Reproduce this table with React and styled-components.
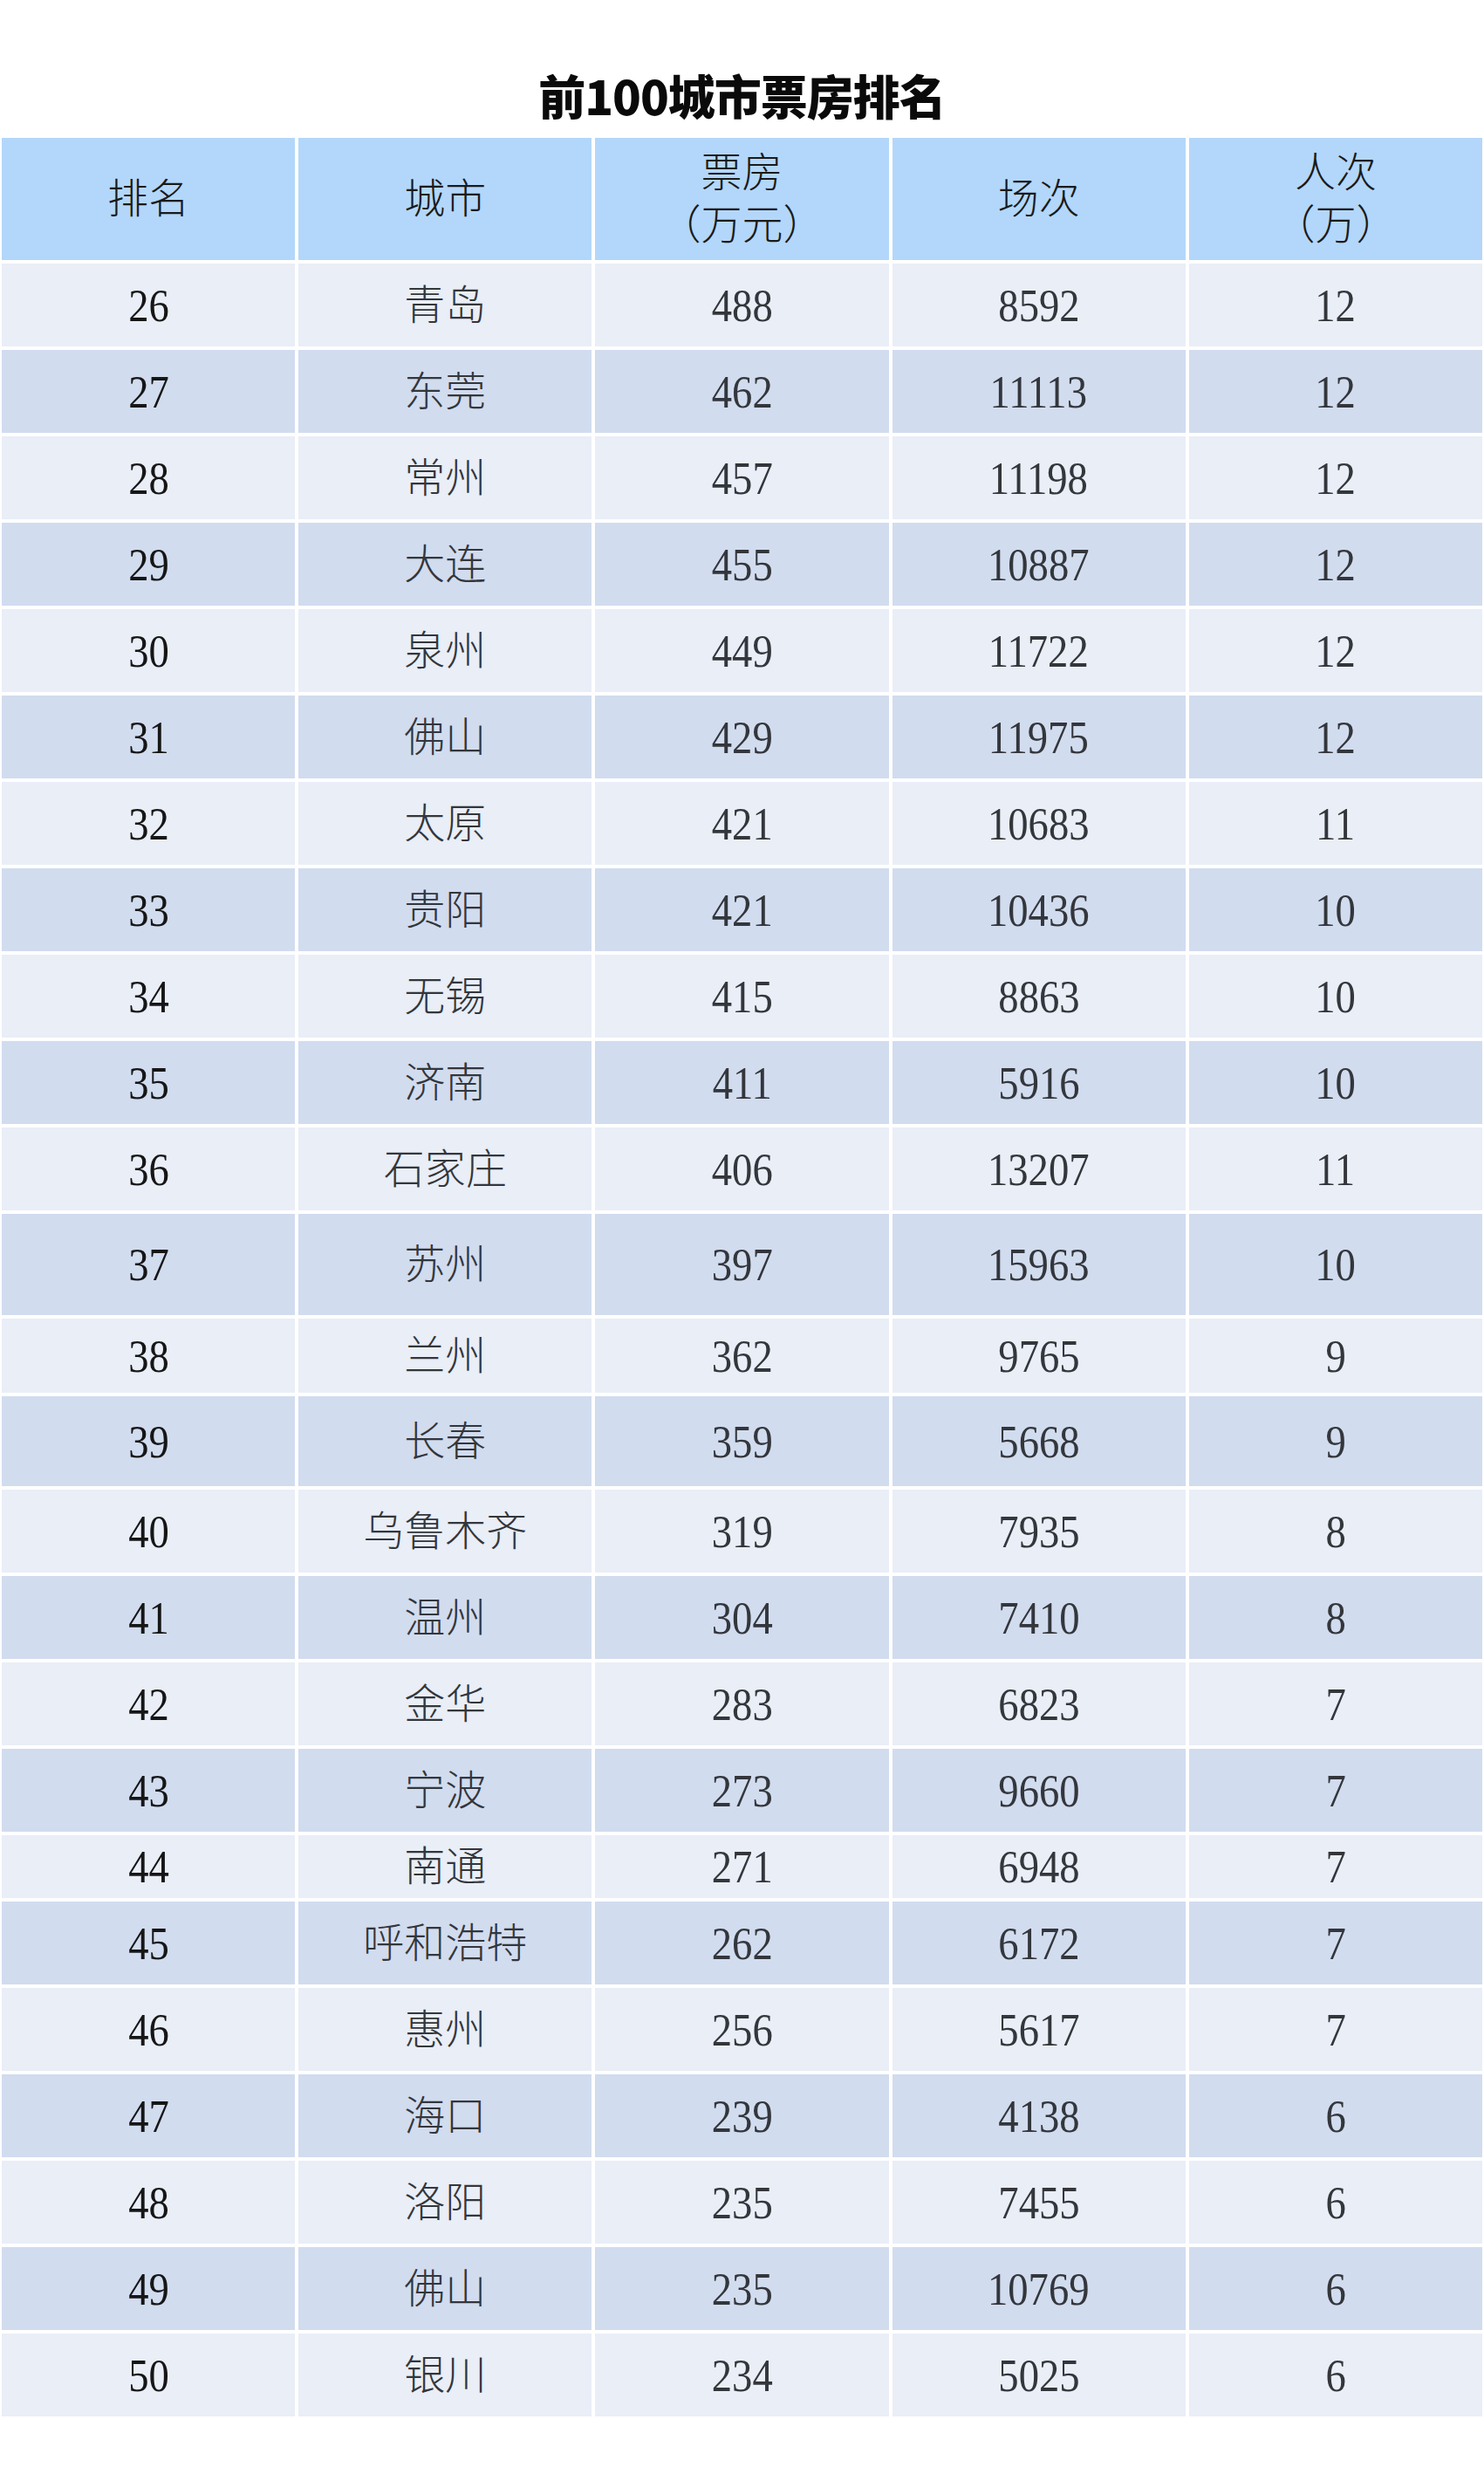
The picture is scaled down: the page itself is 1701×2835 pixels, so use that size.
import React from "react";
import styled, { createGlobalStyle } from "styled-components";

const Global = createGlobalStyle`
  html, body { margin: 0; padding: 0; background: #ffffff; }
  body { font-family: "Liberation Serif", "Noto Sans CJK SC", serif; }
`;

const Page = styled.div`
  width: 1701px;
  background: #ffffff;
  padding-bottom: 66px;
`;

const Title = styled.h1`
  margin: 0;
  padding: 82px 0 22px;
  height: 54px;
  line-height: 54px;
  text-align: center;
  font-family: "Noto Sans CJK SC", "Noto Sans", sans-serif;
  font-weight: 900;
  font-size: 54px;
  color: #0a0a0a;
  letter-spacing: -1px;
`;

const Table = styled.div`
  margin-left: 2px;
  width: 1697px;
  display: flex;
  flex-direction: column;
  gap: 4px;
`;

const Row = styled.div`
  display: grid;
  grid-template-columns: repeat(5, 1fr);
  gap: 4px;
  height: ${(p) => p.$h}px;
`;

const bg = { head: "#b3d7fa", light: "#e9eef7", dark: "#d1dcef" };

const Cell = styled.div`
  background: ${(p) => bg[p.$tone]};
  display: flex;
  flex-direction: column;
  align-items: center;
  justify-content: center;
  font-family: "Liberation Serif", "Noto Sans CJK SC", serif;
  font-weight: 300;
  font-size: 47px;
  line-height: 60px;
  color: ${(p) => (p.$tone === "head" ? "#1a1a1a" : p.$strong ? "#161616" : "#33363b")};
  text-align: center;
`;

const Line = styled.span`
  display: inline-block;
  white-space: nowrap;
  font-size: ${(p) => (p.$num ? "53px" : "inherit")};
  transform: ${(p) => (p.$num ? "scaleX(0.88)" : "none")};
`;

const headers = [["排名"], ["城市"], ["票房", "（万元）"], ["场次"], ["人次", "（万）"]];

const data = [
  [26, "青岛", 488, 8592, 12],
  [27, "东莞", 462, 11113, 12],
  [28, "常州", 457, 11198, 12],
  [29, "大连", 455, 10887, 12],
  [30, "泉州", 449, 11722, 12],
  [31, "佛山", 429, 11975, 12],
  [32, "太原", 421, 10683, 11],
  [33, "贵阳", 421, 10436, 10],
  [34, "无锡", 415, 8863, 10],
  [35, "济南", 411, 5916, 10],
  [36, "石家庄", 406, 13207, 11],
  [37, "苏州", 397, 15963, 10],
  [38, "兰州", 362, 9765, 9],
  [39, "长春", 359, 5668, 9],
  [40, "乌鲁木齐", 319, 7935, 8],
  [41, "温州", 304, 7410, 8],
  [42, "金华", 283, 6823, 7],
  [43, "宁波", 273, 9660, 7],
  [44, "南通", 271, 6948, 7],
  [45, "呼和浩特", 262, 6172, 7],
  [46, "惠州", 256, 5617, 7],
  [47, "海口", 239, 4138, 6],
  [48, "洛阳", 235, 7455, 6],
  [49, "佛山", 235, 10769, 6],
  [50, "银川", 234, 5025, 6],
];

const heights = { 37: 116, 38: 85, 39: 103, 44: 72 };

export default function App() {
  return (
    <Page>
      <Global />
      <Title>前100城市票房排名</Title>
      <Table>
        <Row $h={140}>
          {headers.map((lines, i) => (
            <Cell key={i} $tone="head">
              {lines.map((l) => (
                <Line key={l}>{l}</Line>
              ))}
            </Cell>
          ))}
        </Row>
        {data.map((r, idx) => (
          <Row key={r[0]} $h={heights[r[0]] || 95}>
            {r.map((v, i) => (
              <Cell key={i} $tone={idx % 2 === 0 ? "light" : "dark"} $strong={i === 0}>
                <Line $num={typeof v === "number"}>{v}</Line>
              </Cell>
            ))}
          </Row>
        ))}
      </Table>
    </Page>
  );
}
